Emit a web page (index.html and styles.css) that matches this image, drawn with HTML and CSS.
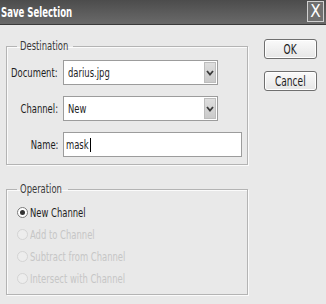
FILE: index.html
```html
<!DOCTYPE html>
<html>
<head>
<meta charset="utf-8" />
<title>Save Selection</title>
<link rel="stylesheet" href="styles.css">
</head>
<body>
<div class="dialog">
 <div class="titlebar">
  <span class="title"><span class="sq">Save Selection</span></span>
  <span class="closeBtn">X</span>
 </div>
 <div class="main">
  <div class="leftCol">
   <fieldset class="group">
    <legend class="destLegend"><span class="sq">Destination</span></legend>
    <div class="row">
     <label><span class="sq">Document:</span></label>
     <div class="combo"><span class="comboText"><span class="sq">darius.jpg</span></span><span class="comboArrow"><svg width="8" height="6" viewBox="0 0 8 6"><path d="M1 1 L4 4.5 L7 1" fill="none" stroke="#3a3a3a" stroke-width="1.8"/></svg></span></div>
    </div>
    <div class="row">
     <label><span class="sq">Channel:</span></label>
     <div class="combo"><span class="comboText"><span class="sq">New</span></span><span class="comboArrow"><svg width="8" height="6" viewBox="0 0 8 6"><path d="M1 1 L4 4.5 L7 1" fill="none" stroke="#3a3a3a" stroke-width="1.8"/></svg></span></div>
    </div>
    <div class="row">
     <label><span class="sq">Name:</span></label>
     <div class="textBox"><span class="sq">mask</span><span class="caret"></span></div>
    </div>
   </fieldset>
   <fieldset class="group ops">
    <legend class="opLegend"><span class="sq">Operation</span></legend>
    <div class="radio"><span class="dot checked"></span><span class="sq">New Channel</span></div>
    <div class="radio disabled"><span class="dot"></span><span class="sq">Add to Channel</span></div>
    <div class="radio disabled"><span class="dot"></span><span class="sq">Subtract from Channel</span></div>
    <div class="radio disabled"><span class="dot"></span><span class="sq">Intersect with Channel</span></div>
   </fieldset>
  </div>
  <div class="rightCol">
   <div class="buttonClass"><span class="sq">OK</span></div>
   <div class="buttonClass"><span class="sq">Cancel</span></div>
  </div>
 </div>
</div>
</body>
</html>
```

FILE: styles.css
```css
html, body {
margin:0; padding:0; background-color:#e9e9e9;
}
.dialog {
width:326px; height:304px; overflow:hidden;
font-family: "DejaVu Sans Condensed", "Liberation Sans", sans-serif;
font-size:13px; color:#1e1e1e;
}
/* squeezed text, the dialog font is very narrow */
.sq {
display:inline-block; white-space:nowrap; transform:scaleX(0.72); transform-origin:left center;
}
.titlebar {
height:25px; display:flex; align-items:center; justify-content:space-between;
background:linear-gradient(#4c4c4c, #5e5e5e 60%, #696969);
border-bottom:1px solid #3a3a3a; box-sizing:border-box;
}
.title {
color:#fff; font-weight:bold; font-size:14px; padding-left:1px; width:80px; overflow:visible;
}
.title .sq { transform:scaleX(0.68); }
.closeBtn {
width:15px; height:19px; margin-right:2px; margin-top:-2px;
border:1px solid #d0d0d0; color:#fff; font-size:17px; line-height:19px;
text-align:center; background:#707070;
}
.main {
display:flex; padding-top:14px;
}
.leftCol {
margin-left:6px; width:242px;
}
.group {
margin:0; padding:7px 0 7px 0; width:242px; box-sizing:border-box;
border:1px solid #b4b4b4; box-shadow:inset 1px 1px 0 #fbfbfb, 1px 1px 0 #fbfbfb;
}
.group legend {
margin-left:10px; padding:0 3px; line-height:14px; color:#3a3a3a; box-sizing:content-box;
}
.destLegend { width:50px; }
.opLegend { width:45px; }
.row {
display:flex; align-items:center; margin-bottom:11px;
}
.row:last-child { margin-bottom:0; }
.row label {
width:51px; margin-right:5px; display:flex; justify-content:flex-end;
}
.row label .sq { transform-origin:right center; flex:none; }
.combo {
width:155px; height:25px; box-sizing:border-box; display:flex; align-items:center;
background:#fff; border:1px solid #9c9c9c;
}
.comboText {
flex:1; padding-left:4px;
}
.comboArrow {
width:12px; height:21px; margin-right:1px; display:flex; align-items:center; justify-content:center;
background:linear-gradient(#dedede, #cacaca); border:1px solid #bdbdbd; box-sizing:border-box;
}
.textBox {
width:179px; height:25px; box-sizing:border-box; display:flex; align-items:center;
background:#fff; border:1px solid #9c9c9c; padding-left:2px;
}
.textBox .sq { width:24px; }
.caret {
display:inline-block; width:1px; height:14px; background:#000;
}
.ops {
margin-top:17px; padding:5px 0 5px 0;
}
.radio {
height:22px; display:flex; align-items:center; padding-left:10px;
}
.radio.disabled { color:#c6c6c6; }
.dot {
width:9px; height:9px; border-radius:50%; border:1px solid #7a7a7a; background:#fff;
margin-right:2px; position:relative; flex:none;
}
.radio.disabled .dot { border-color:#d4d4d4; background:#ededed; }
.dot.checked::after {
content:""; position:absolute; left:2px; top:2px; width:5px; height:5px; border-radius:50%; background:#333;
}
.rightCol {
margin-left:16px;
}
.buttonClass {
width:53px; height:20px; box-sizing:border-box; margin-bottom:12px;
border:1px solid #6f6f6f; border-radius:3px; background:linear-gradient(#fafafa, #e6e6e6);
text-align:center; line-height:18px; font-size:14px;
box-shadow:inset 0 0 0 1px #fff;
}
.buttonClass .sq { transform-origin:center center; }
```
